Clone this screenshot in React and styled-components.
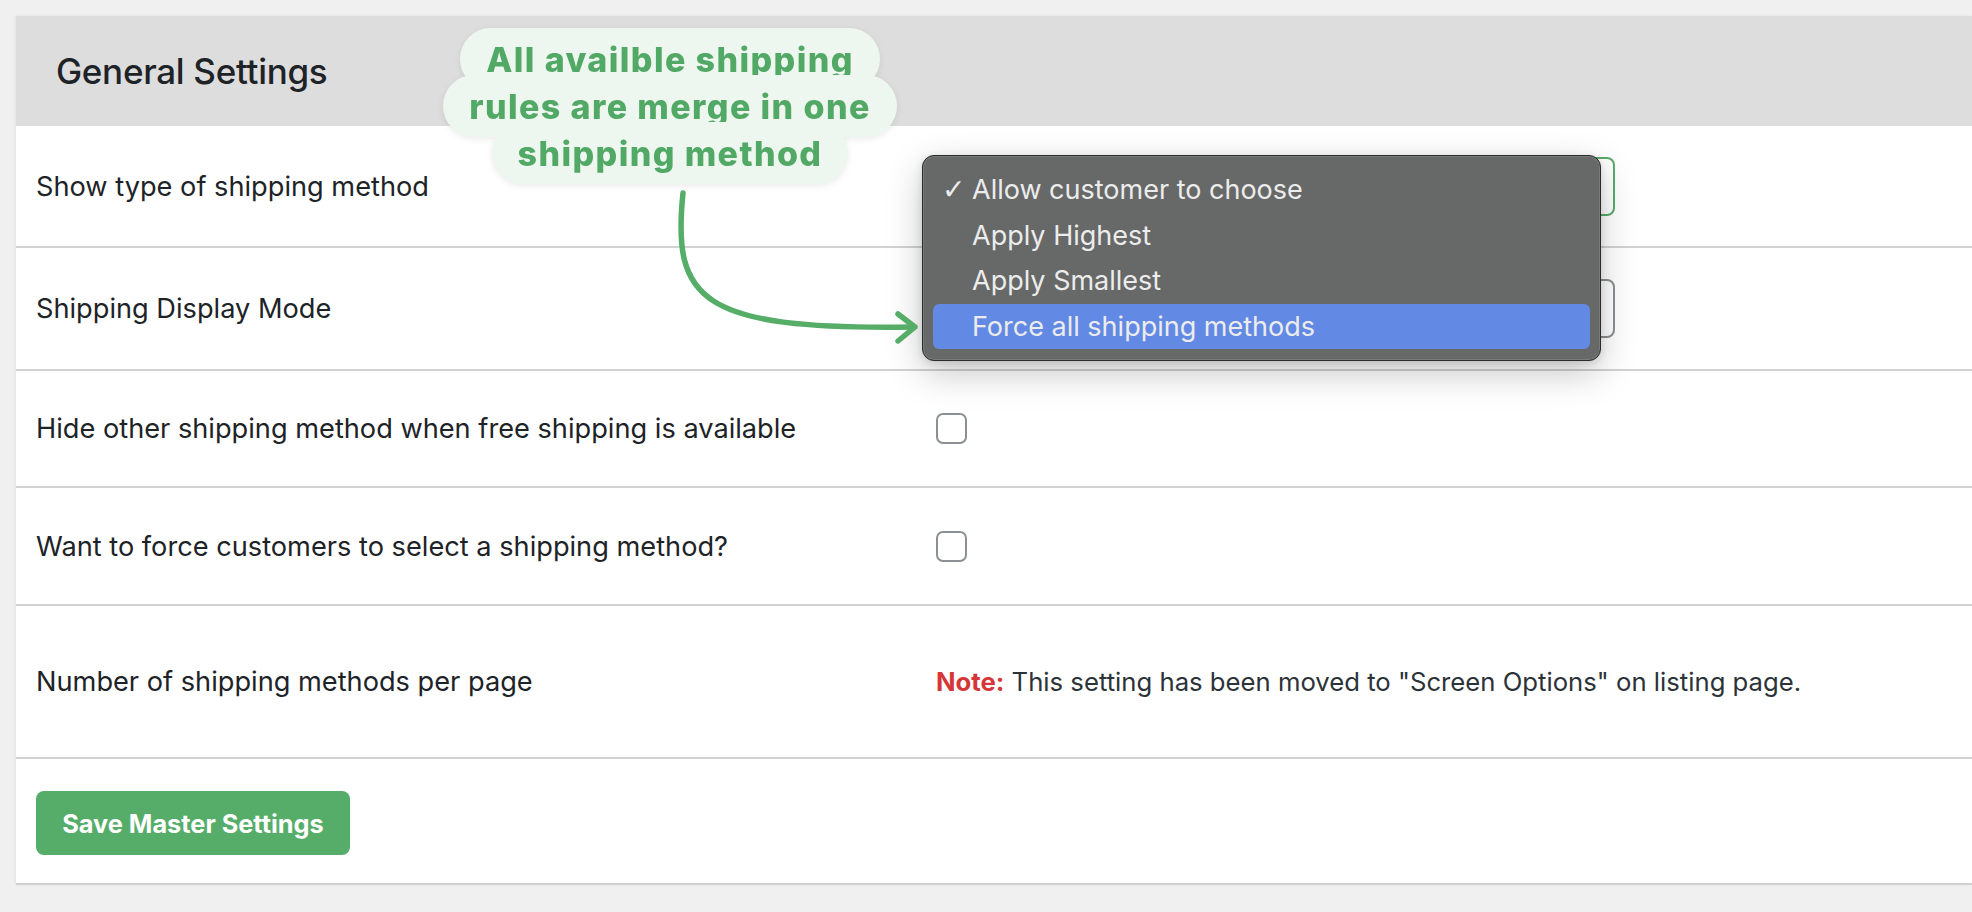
import React from "react";
import styled, { createGlobalStyle } from "styled-components";

const GlobalStyle = createGlobalStyle`
  html, body { margin: 0; padding: 0; background: #f0f0f1; }
  body { font-family: Inter, "Noto Sans", "Liberation Sans", sans-serif; color: #1d2327; }
  * { box-sizing: border-box; }
`;

const Page = styled.div`
  padding: 16px 0 27px 16px;
`;

const Card = styled.div`
  position: relative;
  background: #ffffff;
  border-bottom: 2px solid #d0d0d2;
  box-shadow: -1px 0 3px rgba(0, 0, 0, 0.06);
`;

const Header = styled.div`
  height: 110px;
  background: #dddddd;
  display: flex;
  align-items: center;
  padding-left: 40px;
  font-size: 35px;
  font-weight: 500;
  color: #1d2327;
  letter-spacing: -0.3px;
`;

const Row = styled.div`
  display: grid;
  grid-template-columns: 920px 1fr;
  align-items: center;
  height: ${(p) => p.$h}px;
  border-bottom: 2px solid #d2d2d4;
`;

const Label = styled.div`
  padding-left: 20px;
  font-size: 27.2px;
  color: #1d2327;
`;

const SelectBox = styled.div`
  width: 679px;
  height: 59px;
  border: 2px solid ${(p) => (p.$focused ? "#56ad6a" : "#8c8f94")};
  border-radius: 8px;
  background: #fff;
`;

const Checkbox = styled.span`
  display: block;
  width: 31px;
  height: 31px;
  border: 2px solid #8c8f94;
  border-radius: 7px;
  background: #fff;
`;

const NoteText = styled.div`
  font-size: 25.7px;
  color: #2c3338;
`;

const NoteLabel = styled.strong`
  color: #d63638;
  font-weight: 700;
`;

const Footer = styled.div`
  height: 124px;
  padding: 32px 20px 0;
`;

const SaveButton = styled.button`
  height: 64px;
  width: 314px;
  border: none;
  border-radius: 8px;
  background: #56ad6a;
  color: #fff;
  font-family: inherit;
  font-size: 25.3px;
  font-weight: 700;
  cursor: pointer;
`;

const Menu = styled.div`
  position: absolute;
  left: 906px;
  top: 139px;
  width: 679px;
  height: 206px;
  padding: 11px 10px;
  background: #676868;
  border: 1px solid #2a2a2a;
  border-radius: 12px;
  box-shadow: inset 0 0 0 1px rgba(255, 255, 255, 0.12),
    0 12px 36px rgba(0, 0, 0, 0.22), 0 2px 8px rgba(0, 0, 0, 0.12);
  display: flex;
  flex-direction: column;
`;

const MenuItem = styled.div`
  position: relative;
  height: 46px;
  display: flex;
  align-items: center;
  padding-left: 39px;
  border-radius: 6px;
  font-size: 27px;
  color: #ececec;
  background: ${(p) => (p.$active ? "#6289e4" : "transparent")};
`;

const Check = styled.span`
  position: absolute;
  left: 9px;
  top: 50%;
  transform: translateY(-52%);
  font-family: "DejaVu Sans", sans-serif;
  font-size: 28px;
  color: #ececec;
`;

const Bubble = styled.div`
  position: absolute;
  left: 423px;
  top: 12px;
  width: 462px;
  display: flex;
  flex-direction: column;
  align-items: center;
  filter: drop-shadow(0 2px 3px rgba(0, 0, 0, 0.08));
`;

const BubbleLine = styled.div`
  height: 62px;
  margin-top: ${(p) => (p.$first ? 0 : -15)}px;
  padding: 0 26px;
  display: flex;
  align-items: center;
  border-radius: 31px;
  background: #eef6f0;
  color: #52a865;
  font-size: 34px;
  font-weight: 800;
  white-space: nowrap;
  letter-spacing: 1.4px;
`;

const ArrowSvg = styled.svg`
  position: absolute;
  left: 0;
  top: 0;
  pointer-events: none;
  overflow: visible;
`;

export default function App() {
  return (
    <>
      <GlobalStyle />
      <Page>
        <Card>
          <Header>General Settings</Header>
          <Row $h={122}>
            <Label>Show type of shipping method</Label>
            <SelectBox $focused />
          </Row>
          <Row $h={123}>
            <Label>Shipping Display Mode</Label>
            <SelectBox />
          </Row>
          <Row $h={117}>
            <Label>Hide other shipping method when free shipping is available</Label>
            <Checkbox />
          </Row>
          <Row $h={118}>
            <Label>Want to force customers to select a shipping method?</Label>
            <Checkbox />
          </Row>
          <Row $h={153}>
            <Label>Number of shipping methods per page</Label>
            <NoteText>
              <NoteLabel>Note:</NoteLabel> This setting has been moved to "Screen Options" on listing page.
            </NoteText>
          </Row>
          <Footer>
            <SaveButton>Save Master Settings</SaveButton>
          </Footer>

          <Menu>
            <MenuItem>
              <Check>✓</Check>Allow customer to choose
            </MenuItem>
            <MenuItem>Apply Highest</MenuItem>
            <MenuItem>Apply Smallest</MenuItem>
            <MenuItem $active>Force all shipping methods</MenuItem>
          </Menu>

          <Bubble>
            <BubbleLine $first>All availble shipping</BubbleLine>
            <BubbleLine>rules are merge in one</BubbleLine>
            <BubbleLine>shipping method</BubbleLine>
          </Bubble>

          <ArrowSvg width="1000" height="400">
            <path
              d="M667 177 C656 284 684 314 896 311"
              fill="none"
              stroke="#55ad67"
              strokeWidth="5.5"
              strokeLinecap="round"
            />
            <path
              d="M882 298 L899 311 L882 325"
              fill="none"
              stroke="#55ad67"
              strokeWidth="5.5"
              strokeLinecap="round"
              strokeLinejoin="round"
            />
          </ArrowSvg>
        </Card>
      </Page>
    </>
  );
}
